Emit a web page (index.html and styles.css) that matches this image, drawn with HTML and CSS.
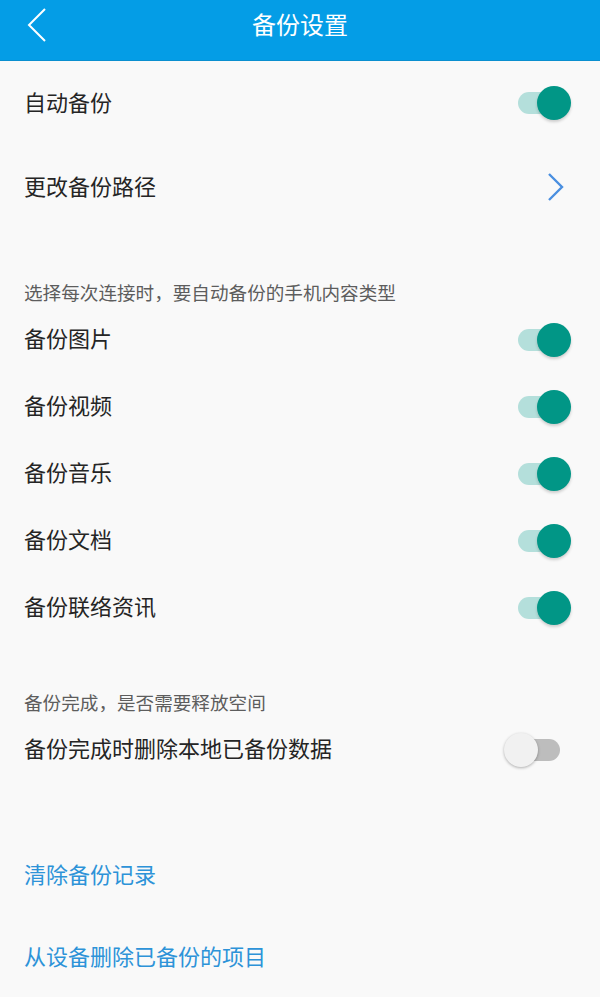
FILE: index.html
```html
<!DOCTYPE html>
<html lang="zh-CN">
<head>
<meta charset="utf-8">
<title>备份设置</title>
<link rel="stylesheet" href="styles.css">
</head>
<body>
<header class="topbar">
  <svg class="back" width="22" height="34" viewBox="0 0 22 34"><polyline points="19,1 3,17 19,33" fill="none" stroke="#fff" stroke-width="2"/></svg>
  <h1 class="title">备份设置</h1>
</header>
<main>
  <div class="row big">
    <span class="label">自动备份</span>
    <span class="switch on"><span class="knob"></span></span>
  </div>
  <div class="row big">
    <span class="label">更改备份路径</span>
    <svg class="chev" width="20" height="30" viewBox="0 0 20 30"><polyline points="3,2 16,15 3,28" fill="none" stroke="#4a8fe0" stroke-width="2.4"/></svg>
  </div>

  <div class="sub sub1">选择每次连接时，要自动备份的手机内容类型</div>
  <div class="row"><span class="label">备份图片</span><span class="switch on"><span class="knob"></span></span></div>
  <div class="row"><span class="label">备份视频</span><span class="switch on"><span class="knob"></span></span></div>
  <div class="row"><span class="label">备份音乐</span><span class="switch on"><span class="knob"></span></span></div>
  <div class="row"><span class="label">备份文档</span><span class="switch on"><span class="knob"></span></span></div>
  <div class="row"><span class="label">备份联络资讯</span><span class="switch on"><span class="knob"></span></span></div>

  <div class="sub sub2">备份完成，是否需要释放空间</div>
  <div class="row"><span class="label">备份完成时删除本地已备份数据</span><span class="switch off"><span class="knob"></span></span></div>

  <div class="row link first">清除备份记录</div>
  <div class="row link">从设备删除已备份的项目</div>
</main>
</body>
</html>
```
FILE: styles.css
```css
html, body {
  margin: 0;
  padding: 0;
  background: #f9f9f9;
  font-family: "Noto Sans CJK SC", "Noto Sans", sans-serif;
}
.topbar {
  height: 60px;
  background: #049de6;
  border-bottom: 1px solid #0a8fcf;
  display: flex;
  align-items: center;
  justify-content: center;
  position: relative;
}
.back {
  position: absolute;
  left: 26px;
  top: 8px;
}
.title {
  margin: 0;
  font-size: 24px;
  font-weight: normal;
  color: #fff;
  line-height: 1;
  margin-top: -12px;
}
main {
  display: flex;
  flex-direction: column;
}
.row {
  height: 67px;
  box-sizing: border-box;
  display: flex;
  align-items: center;
  justify-content: space-between;
  padding: 0 40px 5px 24px;
  font-size: 22px;
  color: #252525;
}
.row.big { height: 84px; }
.chev { margin-right: -6px; margin-top: 4px; }
.sub {
  font-size: 18.6px;
  color: #5d5d5d;
  line-height: 26px;
  padding-left: 24px;
  padding-bottom: 1px;
}
.sub1 { margin-top: 50px; }
.sub2 { margin-top: 48px; }
.switch {
  position: relative;
  width: 42px;
  height: 22px;
  border-radius: 11px;
  margin-top: 5px;
}
.switch.on { background: #b4dfdb; }
.switch.off { background: #bdbdbd; }
.knob {
  position: absolute;
  top: -6px;
  width: 34px;
  height: 34px;
  border-radius: 50%;
}
.switch.on .knob {
  right: -11px;
  background: #019686;
  box-shadow: 0 2px 3px rgba(0,0,0,0.18);
}
.switch.off .knob {
  left: -14px;
  background: #f1f1f1;
  box-shadow: 0 1px 3px rgba(0,0,0,0.3);
}
.link {
  height: 82px;
  color: #2d93d8;
}
.link.first { margin-top: 51px; }
```
